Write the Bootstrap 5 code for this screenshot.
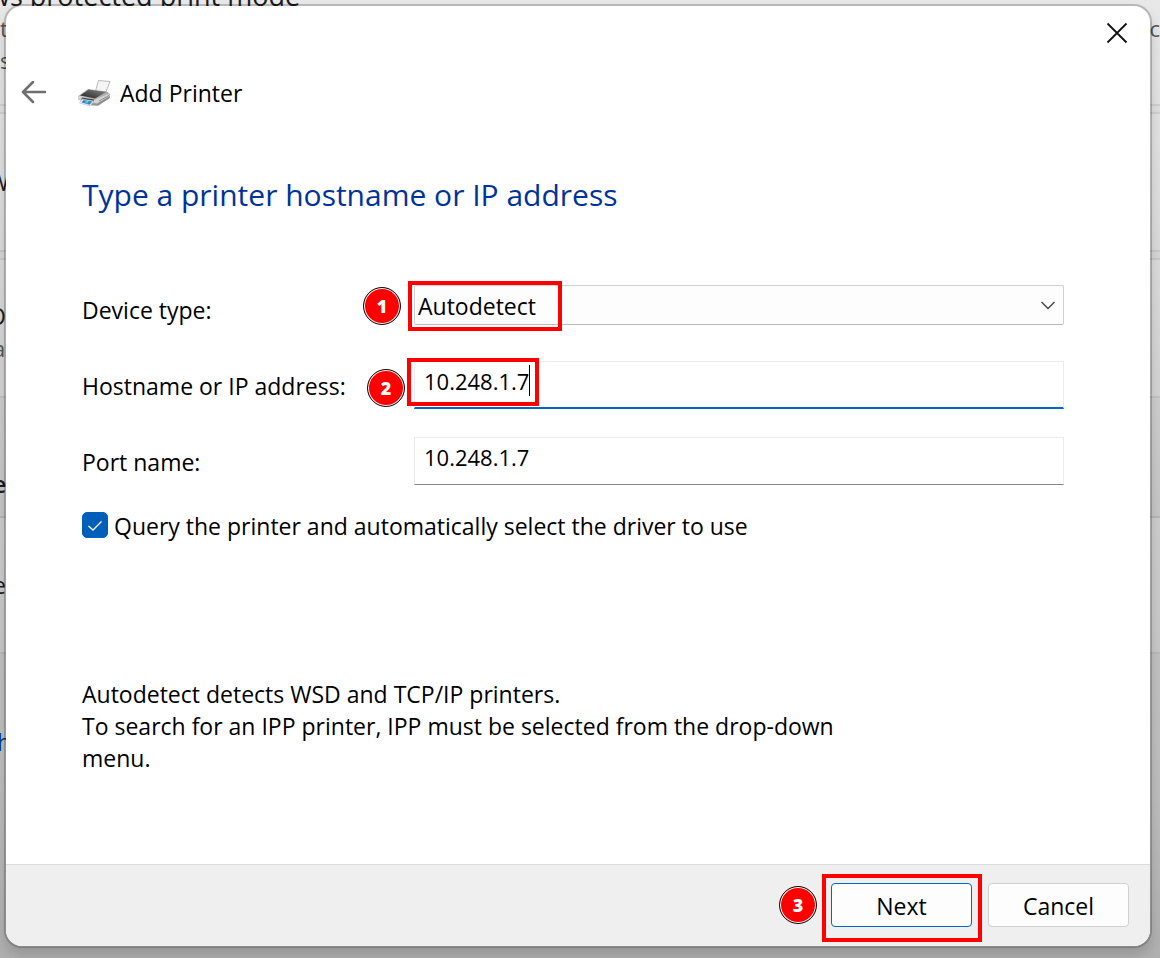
<!DOCTYPE html>
<html lang="en">
<head>
<meta charset="utf-8">
<meta name="viewport" content="width=device-width, initial-scale=1">
<title>Add Printer</title>
<link rel="stylesheet" href="https://cdn.jsdelivr.net/npm/bootstrap@5.3.0/dist/css/bootstrap.min.css">
<style>
  body { font: 23px/32px "Open Sans", "Noto Sans", sans-serif; color: #000; background: #d0d0d0; }
  .desktop { min-height: 100vh; grid-template-columns: 1fr; }
  .desktop > * { grid-area: 1 / 1; }

  /* settings page behind the dialog */
  .settings { background: linear-gradient(#e5e5e5 0, #dadada 200px, #c6c6c6 520px, #bdbdbd 800px, #b0b0b0); height: 0; min-height: 100%; color: #1b1b1b; }
  .panel { border: solid rgba(0,0,0,.08); border-width: 0 0 2px; background: rgba(255,255,255,.12); flex: none; white-space: nowrap; overflow: hidden; }
  .panel-group { border-top-width: 2px; margin-top: 6px; height: 140px; }
  .panel-first { height: 106px; }
  .panel-heading { height: 120px; background: none; }
  .panel-item { height: 136px; }
  .lead-line { margin: -20px 0 0 -11px; font-size: 27px; font-weight: 500; }
  .side-text { margin-left: -7px; }
  .muted-text { color: #555; font-size: 22px; }
  .side-cut { margin-left: -12px; }
  .link-text { color: #003a94; margin: 72px 0 0 -3px; }

  /* dialog window */
  .window { margin: 4px 8px 10px 4px; border: 2px solid rgba(0,0,0,.2); border-radius: 18px; background: #fff; background-clip: padding-box; box-shadow: 0 8px 12px rgba(0,0,0,.14); }
  .icon-btn { background: none; border: 0; padding: 0; line-height: 0; }
  .titlebar { padding: 16px 22px 0 0; }
  .crumb { padding: 33px 0 0 14px; }
  .back { margin-right: 30px; }
  .page-body { padding: 64px 86px 72px 76px; }
  .page-title { font-size: 30px; line-height: 44px; color: #003399; margin-bottom: 68px; }
  .field-row { min-height: 52px; margin-bottom: 24px; }
  .field-label { width: 332px; line-height: 50px; flex: none; }
  .win-select, .win-input { color: #000; border-radius: 0; box-shadow: none !important; }
  .win-select { font-size: 23px; height: 40px; line-height: 32px; padding: 4px 40px 2px 3px; border: 1px solid #d0d0d0; border-bottom-color: #bbb; border-radius: 2px; background: #fdfdfd; appearance: none; }
  .win-input { font-size: 22px; height: 48px; line-height: 32px; padding: 3px 8px 11px 9px; border: 1px solid #ececec; border-bottom: 1px solid #868686; }
  .win-input.active-input { border-bottom: 2px solid #0067c0; }
  .chevron { right: 8px; top: 13px; pointer-events: none; }
  .query { margin-top: -5px; }
  .query .form-check-input { width: 26px; height: 26px; margin: 0; border-radius: 5px; background-image: none; }
  .query .form-check-input:checked { background-color: #005fb8; border-color: #005fb8; }
  .query label { padding: 2px 0 0 6px; }
  .tick { left: 5px; top: 10px; pointer-events: none; }
  .hint { max-width: 790px; margin-top: 136px; }
  .window-footer { border-top: 1px solid #dcdcdc; background: #efefef; border-radius: 0 0 16px 16px; padding: 18px 21px 19px; }
  .win-btn { width: 141px; height: 44px; font-size: 23px; line-height: 32px; padding: 6px 5px 4px; background: #fdfdfd; border: 1px solid #d0d0d0; border-radius: 4px; color: #000; }
  .win-btn-default { border-color: #0067c0; }

  /* numbered walkthrough marks */
  .frame { border: 4px solid #f00; pointer-events: none; }
  .frame-type { left: -6px; top: -4px; width: 154px; height: 50px; }
  .frame-host { left: -7px; top: -3px; width: 132px; height: 48px; }
  .frame-next { left: -9px; top: -9px; width: 160px; height: 68px; }
  .caret { left: 115px; top: 4px; width: 1px; height: 31px; background: #000; }
  .step { width: 38px; height: 38px; border: 1px solid #111; border-radius: 50%; background: #f00; box-shadow: inset 0 0 0 1px #fff; color: #fff; font-weight: 800; font-size: 18px; line-height: 36px; text-align: center; }
  .step-type { left: -51px; top: 2px; }
  .step-host { left: -47px; top: 8px; }
  .step-next { left: -52px; top: 3px; }
</style>
</head>
<body>
<div class="desktop d-grid">
  <div class="settings d-flex flex-column overflow-hidden" aria-hidden="true">
    <div class="panel panel-first">
      <div class="lead-line">ws protected print mode</div>
      <div class="d-flex justify-content-between muted-text"><span>t</span><span>c</span></div>
      <div class="muted-text">s</div>
    </div>
    <div class="panel panel-group d-flex align-items-center"><span class="side-cut">W</span></div>
    <div class="panel panel-group d-flex flex-column justify-content-center pt-2"><span class="side-cut">O</span><span class="side-text muted-text">a</span></div>
    <div class="panel panel-heading d-flex align-items-end pb-3"><span class="side-text fw-semibold">e</span></div>
    <div class="panel panel-item d-flex align-items-center"><span class="side-text">e</span></div>
    <div class="link-text">h</div>
  </div>

  <main class="window d-flex flex-column position-relative">
    <div class="titlebar d-flex justify-content-end">
      <button class="icon-btn" type="button" aria-label="Close">
        <svg width="22" height="22" viewBox="0 0 22 22" fill="none" stroke="#111" stroke-width="1.8"><path d="M1.5 1.5l19 19M20.5 1.5l-19 19"/></svg>
      </button>
    </div>
    <header class="crumb d-flex align-items-center">
      <button class="icon-btn back" type="button" aria-label="Back">
        <svg width="28" height="24" viewBox="0 0 28 24" fill="none" stroke="#6e6e6e" stroke-width="2.5" stroke-linecap="round" stroke-linejoin="round"><path d="M13 1L3 11l10 10M3 11h22"/></svg>
      </button>
      <svg class="me-2" width="34" height="30" viewBox="0 0 34 30">
        <defs>
          <linearGradient id="lid" x1="0" y1="1" x2="1" y2="0"><stop offset="0" stop-color="#222"/><stop offset="1" stop-color="#858585"/></linearGradient>
          <linearGradient id="side" x1="0" y1="0" x2="1" y2="1"><stop offset="0" stop-color="#f2f2f2"/><stop offset="1" stop-color="#777"/></linearGradient>
        </defs>
        <path d="M17.500 13L20.500 2.500 32 3.500 27.500 15z" fill="#f5f5f5" stroke="#aaa" stroke-width=".8"/>
        <path d="M0 18.500L10 11.500 29 14 31.500 16 31.500 20 20 27.500 13 27 0 21z" fill="url(#side)" stroke="#888" stroke-width=".5"/>
        <path d="M2 17.500L10.500 11.500 28 14 17 20.500z" fill="url(#lid)"/>
        <path d="M0 18.500L17 21.500 31 15.500 31.500 18 19 25.500 0 21z" fill="#d4d4d4"/>
        <path d="M21 23L31 17.500M21 25.500L31 20" stroke="#888" stroke-width=".9"/>
        <path d="M4 19.500L16.500 21.500 15 24 3 22z" fill="#444"/>
        <path d="M4 21L16 23 12 28 1.500 25z" fill="#eef5fb" stroke="#aaa" stroke-width=".5"/>
        <path d="M5.500 22L14.500 23.600 11.500 26.800 3.500 24.500z" fill="#2f86d0"/>
        <path d="M8 22.500l3 .6-1.500 2.500-2.500-.5z" fill="#65c4bb"/>
      </svg>
      <span>Add Printer</span>
    </header>

    <form class="page-body flex-fill">
      <h1 class="page-title fw-normal">Type a printer hostname or IP address</h1>
      <div class="field-row d-flex align-items-start">
        <label class="field-label" for="type">Device type:</label>
        <div class="position-relative flex-fill">
          <select class="win-select w-100 d-block" id="type"><option>Autodetect</option></select>
          <svg class="chevron position-absolute" width="16" height="14" viewBox="0 0 16 14" fill="none" stroke="#444" stroke-width="1.4"><path d="M1.500 4L8 10.500 14.500 4"/></svg>
          <span class="frame frame-type position-absolute"></span>
          <span class="step step-type position-absolute">1</span>
        </div>
      </div>
      <div class="field-row d-flex align-items-start">
        <label class="field-label" for="host">Hostname or IP address:</label>
        <div class="position-relative flex-fill">
          <input class="form-control win-input active-input" id="host" type="text" value="10.248.1.7">
          <span class="caret position-absolute"></span>
          <span class="frame frame-host position-absolute"></span>
          <span class="step step-host position-absolute">2</span>
        </div>
      </div>
      <div class="field-row d-flex align-items-start">
        <label class="field-label" for="port">Port name:</label>
        <div class="flex-fill"><input class="form-control win-input" id="port" type="text" value="10.248.1.7"></div>
      </div>
      <div class="query d-flex align-items-center position-relative">
        <input class="form-check-input" id="query" type="checkbox" checked>
        <svg class="tick position-absolute" width="16" height="16" viewBox="0 0 16 16" fill="none" stroke="#fff" stroke-width="1.3"><path d="M1.500 8L6 12 14.500 3.500"/></svg>
        <label for="query">Query the printer and automatically select the driver to use</label>
      </div>
      <p class="hint mb-0">Autodetect detects WSD and TCP/IP printers.<br>To search for an IPP printer, IPP must be selected from the drop-down menu.</p>
    </form>

    <footer class="window-footer d-flex justify-content-end gap-3">
      <div class="position-relative">
        <button class="win-btn win-btn-default" type="button">Next</button>
        <span class="frame frame-next position-absolute"></span>
        <span class="step step-next position-absolute">3</span>
      </div>
      <button class="win-btn" type="button">Cancel</button>
    </footer>
  </main>
</div>
<script src="https://cdn.jsdelivr.net/npm/bootstrap@5.3.0/dist/js/bootstrap.bundle.min.js"></script>
</body>
</html>
